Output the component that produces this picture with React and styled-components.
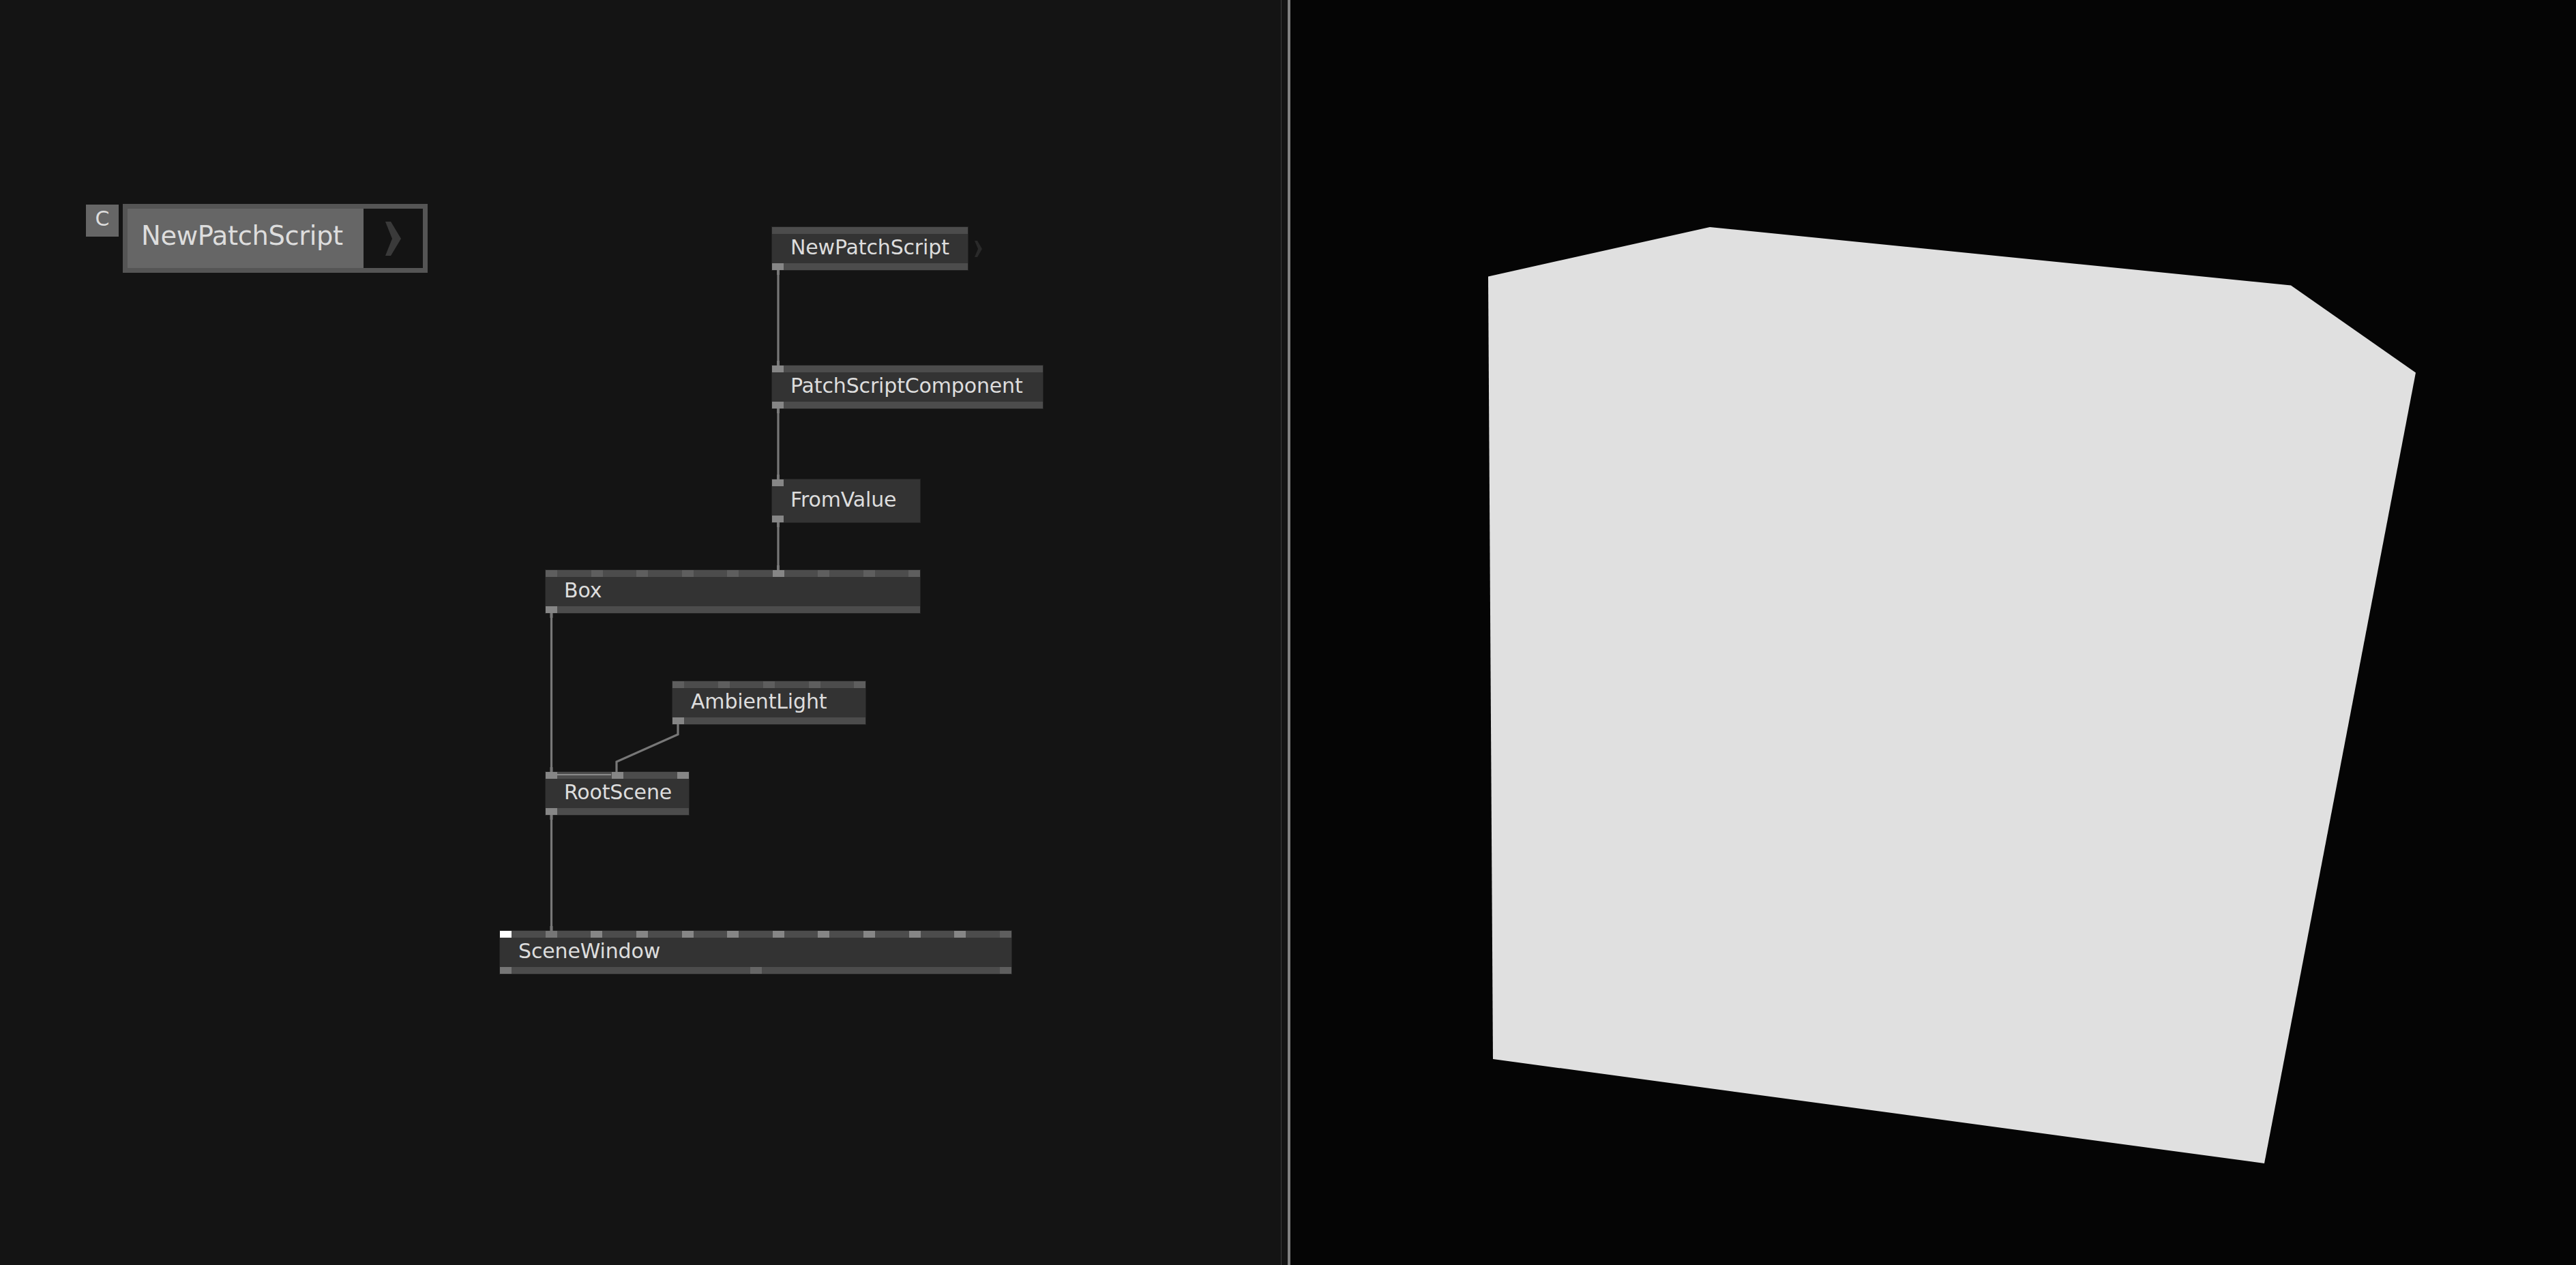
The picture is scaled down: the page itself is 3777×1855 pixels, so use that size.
import styled, { createGlobalStyle } from "styled-components";

const GlobalStyle = createGlobalStyle`
  html, body {
    margin: 0;
    padding: 0;
    height: 100%;
    background: #050505;
  }
  #root {
    height: 100%;
  }
`;

const portColors = {
  off: "#5e5e5e",
  on: "#868686",
  dim: "#767676",
  mid: "#666666",
  live: "#ffffff",
};

const Page = styled.div`
  display: flex;
  width: 3777px;
  height: 1855px;
  overflow: hidden;
  font-family: "DejaVu Sans", "Liberation Sans", sans-serif;
`;
const PatchCanvas = styled.div`
  position: relative;
  flex: 0 0 1878px;
  background: #141414;
`;
const Gutter = styled.div`
  flex: 0 0 10px;
  box-sizing: border-box;
  background: #141414;
  border-left: 1px solid #3d3d3d;
`;
const Splitter = styled.div`
  flex: 0 0 4px;
  background: #808080;
`;
const Viewer = styled.div`
  flex: 1;
  background: #050505;
`;
const ViewerShape = styled.svg`
  display: block;
  width: 100%;
  height: 100%;
`;
const Wires = styled.svg`
  position: absolute;
  left: 0;
  top: 0;
  width: 100%;
  height: 100%;
  pointer-events: none;
`;

const NodeBox = styled.div`
  position: absolute;
  left: ${(p) => p.$x}px;
  top: ${(p) => p.$y}px;
  width: ${(p) => p.$w}px;
  height: 63px;
  display: flex;
  flex-direction: column;
  background: #333333;
  outline: 1px solid #222222;
`;
const PortRow = styled.div`
  flex: 0 0 10px;
  display: flex;
  justify-content: space-between;
  background: ${(p) => (p.$flat ? "transparent" : "#4c4c4c")};
`;
const Port = styled.div`
  flex: 0 0 17px;
  background: ${(p) => portColors[p.$kind]};
`;
const NodeLabel = styled.div`
  flex: 1;
  padding-left: 27px;
  color: #dddddd;
  font-size: 30px;
  line-height: 40px;
  letter-spacing: -0.15px;
  white-space: nowrap;
`;
const NextArrow = styled.svg`
  position: absolute;
  left: calc(100% + 10px);
  top: 20px;
  width: 11px;
  height: 24px;
`;

const CommentTag = styled.div`
  position: absolute;
  left: 126px;
  top: 300px;
  width: 48px;
  height: 47px;
  display: flex;
  justify-content: center;
  background: #666666;
  color: #dddddd;
  font-size: 30px;
  line-height: 42px;
`;
const ScriptButton = styled.div`
  position: absolute;
  left: 180px;
  top: 299px;
  width: 447px;
  height: 101px;
  box-sizing: border-box;
  display: flex;
  border: 7px solid #555555;
`;
const ScriptName = styled.div`
  flex: 1;
  padding-left: 20px;
  background: #666666;
  color: #dddddd;
  font-size: 38.5px;
  line-height: 79px;
  letter-spacing: -0.4px;
  white-space: nowrap;
`;
const ScriptOpen = styled.div`
  flex: 0 0 87px;
  display: flex;
  align-items: center;
  justify-content: center;
  background: #141414;
`;
const OpenArrow = styled.svg`
  width: 23px;
  height: 50px;
`;

function row(count, kind, overrides = {}) {
  return Array.from({ length: count }, (_, i) => overrides[i] || kind);
}

const nodes = [
  { name: "NewPatchScript", x: 1132, y: 333, w: 287, top: [], bottom: ["on"], next: true },
  { name: "PatchScriptComponent", x: 1132, y: 536, w: 397, top: ["on"], bottom: ["on"] },
  { name: "FromValue", x: 1132, y: 703, w: 217, top: ["on"], bottom: ["on"], flat: true },
  { name: "Box", x: 800, y: 836, w: 549, top: row(9, "off", { 5: "on" }), bottom: ["on"] },
  { name: "AmbientLight", x: 986, y: 999, w: 283, top: row(5, "off"), bottom: ["on"] },
  { name: "RootScene", x: 800, y: 1132, w: 210, top: row(3, "on"), bottom: ["on"] },
  {
    name: "SceneWindow",
    x: 733,
    y: 1365,
    w: 750,
    top: row(12, "on", { 0: "live", 1: "dim", 11: "off" }),
    bottom: ["dim", "mid", "off"],
  },
];

const straightWires = [
  [1141, 396, 536],
  [1141, 599, 703],
  [1141, 766, 836],
  [808.5, 899, 1132],
  [808.5, 1195, 1365],
];

function Node({ name, x, y, w, top, bottom, flat, next }) {
  return (
    <NodeBox $x={x} $y={y} $w={w}>
      <PortRow $flat={flat}>
        {top.map((kind, i) => (
          <Port key={i} $kind={kind} />
        ))}
      </PortRow>
      <NodeLabel>{name}</NodeLabel>
      <PortRow $flat={flat}>
        {bottom.map((kind, i) => (
          <Port key={i} $kind={kind} />
        ))}
      </PortRow>
      {next && (
        <NextArrow viewBox="0 0 11 24">
          <path d="M0 0h4l7 12-7 12H0l5-12z" fill="#2a2a2a" />
        </NextArrow>
      )}
    </NodeBox>
  );
}

export default function App() {
  return (
    <>
      <GlobalStyle />
      <Page>
        <PatchCanvas>
          <CommentTag>C</CommentTag>
          <ScriptButton>
            <ScriptName>NewPatchScript</ScriptName>
            <ScriptOpen>
              <OpenArrow viewBox="0 0 23 50">
                <path d="M0 0h8l15 25-15 25H0l10-25z" fill="#3a3a3a" />
              </OpenArrow>
            </ScriptOpen>
          </ScriptButton>
          {nodes.map((node) => (
            <Node key={node.name} {...node} />
          ))}
          <Wires viewBox="0 0 1878 1855">
            <g fill="none" stroke="#777777">
              {straightWires.map(([x, y1, y2]) => (
                <g key={y1}>
                  <path d={`M${x} ${y1}V${y2}`} strokeWidth="3.2" />
                  <path d={`M${x} ${y1}v7M${x} ${y2 - 7}v7`} strokeWidth="4" />
                </g>
              ))}
              <path d="M994 1062V1077L904 1117V1132" strokeWidth="3.2" />
              <path d="M816 1136H896" stroke="#8a8a8a" strokeWidth="2" />
            </g>
          </Wires>
        </PatchCanvas>
        <Gutter />
        <Splitter />
        <Viewer>
          <ViewerShape viewBox="1892 0 1885 1855">
            <polygon
              points="2182,405.5 2507,333 3359,418.5 3542,546.5 3320,1706 2189,1553"
              fill="#e0e0e0"
            />
          </ViewerShape>
        </Viewer>
      </Page>
    </>
  );
}
